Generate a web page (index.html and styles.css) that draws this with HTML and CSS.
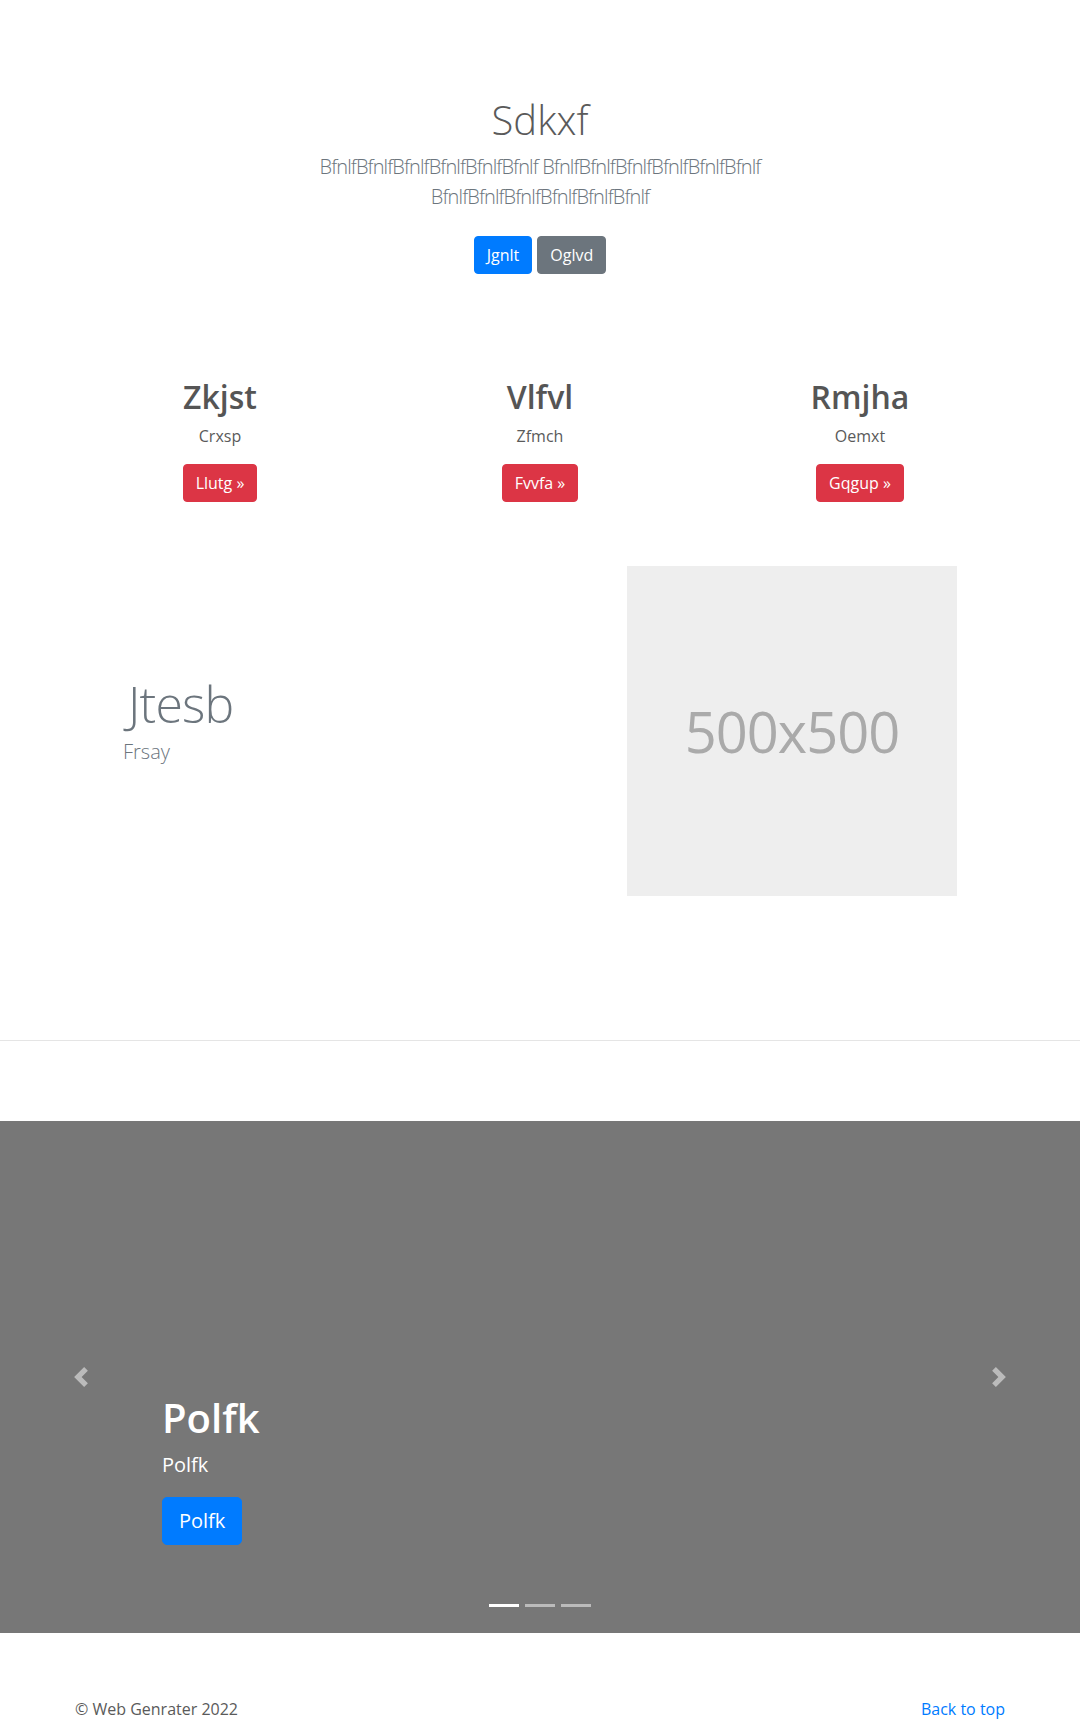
FILE: index.html
```html
<!DOCTYPE html>
<html lang="en">
<head>
<meta charset="utf-8">
<title>Sdkxf</title>
<link rel="stylesheet" href="styles.css">
</head>
<body>
<main>
  <section class="jumbotron">
    <div class="jumbo-inner">
      <h1 class="jumbo-title">Sdkxf</h1>
      <p class="lead muted">BfnlfBfnlfBfnlfBfnlfBfnlfBfnlf BfnlfBfnlfBfnlfBfnlfBfnlfBfnlf BfnlfBfnlfBfnlfBfnlfBfnlfBfnlf</p>
      <div class="jumbo-actions">
        <a href="#" class="btn btn-primary">Jgnlt</a>
        <a href="#" class="btn btn-secondary">Oglvd</a>
      </div>
    </div>
  </section>

  <section class="container marketing">
    <div class="row">
      <div class="col-4">
        <h2 class="col-title">Zkjst</h2>
        <p class="col-text">Crxsp</p>
        <p class="col-action"><a href="#" class="btn btn-danger">Llutg »</a></p>
      </div>
      <div class="col-4">
        <h2 class="col-title">Vlfvl</h2>
        <p class="col-text">Zfmch</p>
        <p class="col-action"><a href="#" class="btn btn-danger">Fvvfa »</a></p>
      </div>
      <div class="col-4">
        <h2 class="col-title">Rmjha</h2>
        <p class="col-text">Oemxt</p>
        <p class="col-action"><a href="#" class="btn btn-danger">Gqgup »</a></p>
      </div>
    </div>
  </section>

  <section class="container featurette-wrap">
    <div class="row featurette">
      <div class="col-7">
        <h2 class="featurette-heading">Jtesb</h2>
        <p class="lead muted featurette-lead">Frsay</p>
      </div>
      <div class="col-5">
        <div class="placeholder">500x500</div>
      </div>
    </div>
  </section>

  <hr class="divider">

  <section class="carousel">
    <div class="carousel-item">
      <div class="carousel-caption">
        <h1 class="caption-title">Polfk</h1>
        <p class="caption-text">Polfk</p>
        <div class="caption-action"><a href="#" class="btn btn-lg btn-primary">Polfk</a></div>
      </div>
    </div>
    <a href="#" class="carousel-control prev" aria-label="Previous">
      <svg class="control-icon" viewBox="0 0 8 8" width="20" height="20"><path d="M5.25 0l-4 4 4 4 1.5-1.5L4.25 4l2.5-2.5L5.25 0z" fill="#fff"/></svg>
    </a>
    <a href="#" class="carousel-control next" aria-label="Next">
      <svg class="control-icon" viewBox="0 0 8 8" width="20" height="20"><path d="M2.75 0l-1.5 1.5L3.75 4l-2.5 2.5L2.75 8l4-4-4-4z" fill="#fff"/></svg>
    </a>
    <ol class="carousel-indicators">
      <li class="active"></li>
      <li></li>
      <li></li>
    </ol>
  </section>

  <footer class="container footer">
    <p class="back-top"><a href="#">Back to top</a></p>
    <p class="copy">© Web Genrater 2022</p>
  </footer>
</main>
</body>
</html>
```

FILE: styles.css
```css
* {
  box-sizing: border-box;
}

html, body {
  margin: 0;
  padding: 0;
}

body {
  font-family: "Open Sans", "Noto Sans", sans-serif;
  font-size: 16px;
  line-height: 1.5;
  color: #5a5a5a;
  background: #fff;
}

a {
  color: #007bff;
  text-decoration: none;
}

.muted {
  color: #6c757d;
}

.lead {
  font-size: 20px;
  font-weight: 300;
  line-height: 30px;
}

/* buttons */
.btn {
  display: inline-block;
  padding: 6px 12px;
  font-size: 16px;
  line-height: 24px;
  font-weight: 400;
  border: 1px solid transparent;
  border-radius: 4px;
  color: #fff;
  text-align: center;
  white-space: nowrap;
}

.btn-lg {
  padding: 8px 16px;
  font-size: 20px;
  line-height: 30px;
  border-radius: 5px;
}

.btn-primary {
  background: #007bff;
  border-color: #007bff;
}

.btn-secondary {
  background: #6c757d;
  border-color: #6c757d;
}

.btn-danger {
  background: #dc3545;
  border-color: #dc3545;
}

/* jumbotron */
.jumbotron {
  padding: 96px 0;
  text-align: center;
}

.jumbo-inner {
  max-width: 640px;
  margin: 0 auto;
  padding: 0 15px;
}

.jumbo-title {
  margin: 0 0 8px;
  font-size: 40px;
  font-weight: 300;
  line-height: 1.2;
  color: #5a5a5a;
}

.jumbotron .lead {
  margin: 0 0 16px;
  letter-spacing: -0.9px;
}

.jumbo-actions {
  display: flex;
  justify-content: center;
  gap: 5px;
  padding: 8px 0;
}

/* grid */
.container {
  width: 960px;
  margin: 0 auto;
  padding: 0 15px;
}

.row {
  display: flex;
  margin: 0 -15px;
}

.col-4 {
  flex: 0 0 33.3333%;
  padding: 0 15px;
}

.col-7 {
  flex: 0 0 58.3333%;
  padding: 0 15px;
}

.col-5 {
  flex: 0 0 41.6667%;
  padding: 0 15px;
}

/* marketing */
.marketing .col-4 {
  text-align: center;
  margin-bottom: 24px;
}

.col-title {
  margin: 0 0 8px;
  font-size: 32px;
  font-weight: 600;
  line-height: 1.2;
  color: #555;
}

.col-text {
  margin: 0 12px 16px;
}

.col-action {
  display: flex;
  justify-content: center;
  margin: 0 12px 16px;
}

/* featurette */
.featurette-wrap {
  padding-top: 24px;
}

.featurette {
  margin: 0 33px;
  align-items: center;
}

.featurette-heading {
  margin: 0 0 8px;
  padding-left: 5px;
  font-size: 50px;
  font-weight: 300;
  line-height: 1;
  letter-spacing: -0.8px;
  color: #6c757d;
}

.featurette-lead {
  margin: 0 0 16px;
}

.placeholder {
  width: 100%;
  aspect-ratio: 1 / 1;
  background: #eee;
  color: #aaa;
  font-size: 56px;
  display: flex;
  align-items: center;
  justify-content: center;
  letter-spacing: -1px;
}

/* divider */
.divider {
  margin: 144px 0 80px;
  border: 0;
  border-top: 1px solid rgba(0, 0, 0, 0.1);
  height: 0;
}

/* carousel */
.carousel {
  position: relative;
  height: 512px;
  margin-bottom: 64px;
  background: #777;
}

.carousel-item {
  height: 100%;
}

.carousel-caption {
  position: absolute;
  left: 15%;
  right: 15%;
  bottom: 48px;
  padding: 20px 0;
  color: #fff;
  text-align: left;
}

.caption-title {
  margin: 0 0 8px;
  font-size: 40px;
  font-weight: 600;
  line-height: 1.2;
}

.caption-text {
  margin: 0 0 17px;
  font-size: 20px;
  line-height: 30px;
}

.caption-action {
  display: flex;
  margin-bottom: 20px;
}

.carousel-control {
  position: absolute;
  top: 0;
  bottom: 0;
  width: 15%;
  display: flex;
  align-items: center;
  justify-content: center;
  opacity: 0.5;
}

.carousel-control.prev {
  left: 0;
}

.carousel-control.next {
  right: 0;
}

.control-icon {
  display: block;
  width: 20px;
  height: 20px;
}

.carousel-indicators {
  position: absolute;
  left: 15%;
  right: 15%;
  bottom: 0;
  margin: 0 0 16px;
  padding: 0;
  list-style: none;
  display: flex;
  justify-content: center;
}

.carousel-indicators li {
  box-sizing: content-box;
  width: 30px;
  height: 3px;
  margin: 0 3px;
  border-top: 10px solid transparent;
  border-bottom: 10px solid transparent;
  background: #fff;
  background-clip: padding-box;
  opacity: 0.5;
}

.carousel-indicators li.active {
  opacity: 1;
}

/* footer */
.footer p {
  margin: 0 0 4px;
}

.back-top {
  float: right;
}
```
